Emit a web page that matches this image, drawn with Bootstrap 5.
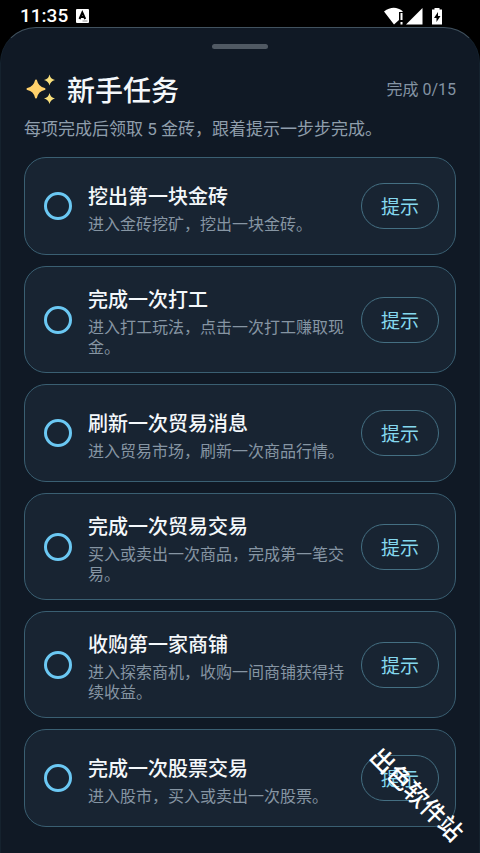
<!DOCTYPE html>
<html lang="zh-CN">
<head>
<meta charset="utf-8">
<meta name="viewport" content="width=device-width, initial-scale=1">
<title>新手任务</title>
<link rel="stylesheet" href="https://cdn.jsdelivr.net/npm/bootstrap@5.3.0/dist/css/bootstrap.min.css">
<style>
body { background: #000; color: #f4f8fb; font-family: Roboto, "Noto Sans CJK SC", sans-serif; }
.status-bar { height: 27px; padding: 5px 36px 0 20px; font-size: 19px; line-height: 22px; font-weight: 500; color: #fff; }
.sheet { background: #101925; border: 1px solid #15222e; border-top-color: #41525f; border-bottom: 0; border-radius: 36px 36px 0 0; padding: 16px 23px 24px; }
.handle { width: 56px; height: 5px; background: #505963; }
.heading { margin-top: 18px; min-height: 42px; }
.heading h1 { font-size: 28px; line-height: 42px; font-weight: 500; padding-top: 4px; }
.progress-note { font-size: 16px; line-height: 24px; color: #8493a3; }
.intro { font-size: 17px; line-height: 26px; margin: 3px 0 15px; color: #8f9eac; }
.tasks { gap: 11px; }
.task { min-height: 98px; padding: 16px 16px 16px 19px; background: #182432; border: 1px solid #3a5f72; border-radius: 22px; }
.task-check { appearance: none; width: 28px; height: 28px; margin: 0 16px 0 0; border: 3px solid #6bc8f3; border-radius: 50%; background: transparent; }
.task-check:checked { background: #6bc8f3; }
.task-text { min-width: 0; margin-right: 10px; padding-top: 3px; }
.task-title { display: block; font-size: 20px; line-height: 28px; font-weight: 500; color: #f4f8fb; }
.task-desc { font-size: 16px; line-height: 20px; margin: 4px 0 -2px; color: #8695a3; }
.hint { width: 78px; height: 46px; padding: 5px 0 0; font-size: 19px; color: #85d8ee; border: 1px solid #446f82; }
.hint:hover { color: #85d8ee; border-color: #85d8ee; }
.site-mark { position: absolute; right: 4px; bottom: 40px; font-size: 24px; line-height: 36px; font-weight: 500; color: #fff; transform: rotate(45deg); pointer-events: none; }
</style>
<script src="https://cdn.jsdelivr.net/npm/bootstrap@5.3.0/dist/js/bootstrap.bundle.min.js" defer></script>
</head>
<body>
<div class="position-relative overflow-hidden min-vh-100 d-flex flex-column">
  <header class="status-bar d-flex align-items-center">
    <span>11:35</span>
    <svg class="ms-2" width="13" height="14" viewBox="0 0 13 14" aria-hidden="true"><rect width="13" height="14" rx="1" fill="#fff"/><path d="M3.500 10 6.300 3.500 9.200 10M4.600 8h3.600" fill="none" stroke="#000" stroke-width="2"/><path d="M6.500 12h5" stroke="#888"/></svg>
    <svg class="ms-auto" width="60" height="18" viewBox="0 0 60 18" aria-hidden="true">
      <path fill="#fff" d="M0 4.500Q10-3 19 4.500L18 5H15v8L10 17.500ZM16.500 6h2v7h-2zm0 9h2v2.500h-2zM22 17.500 38.500 1v16.500ZM48 2.500h2.500V1h5v1.500H58v15H48Z"/>
      <path fill="#000" d="m54 5-4 6h2.500v4l4-6H54Z"/>
    </svg>
  </header>
  <main class="sheet flex-grow-1">
    <div class="handle rounded-pill mx-auto"></div>
    <div class="heading d-flex align-items-center">
      <svg class="me-2" width="35" height="36" viewBox="0 0 35 36" aria-hidden="true"><path fill="#ffd16c" d="M12 8.500Q13.500 15.500 20.500 17 13.500 18.500 12 25.500 10.500 18.500 3.500 17 10.500 15.500 12 8.500Z" stroke="#ffd16c" stroke-linejoin="round" stroke-width="2"/><path fill="#f8df7c" d="M25.500 2.500Q26.500 7 31 8 26.500 9 25.500 13.500 24.500 9 20 8 24.500 7 25.500 2.500ZM25.500 21Q26.500 25.500 31 26.500 26.500 27.500 25.500 32 24.500 27.500 20 26.500 24.500 25.500 25.500 21Z"/></svg>
      <h1 class="mb-0">新手任务</h1>
      <span class="progress-note ms-auto">完成 0/15</span>
    </div>
    <p class="intro">每项完成后领取 5 金砖，跟着提示一步步完成。</p>
    <ul class="tasks list-unstyled d-flex flex-column mb-0">
      <li class="task d-flex align-items-center">
        <input class="task-check flex-shrink-0" type="checkbox" id="task1">
        <div class="task-text flex-grow-1"><label class="task-title" for="task1">挖出第一块金砖</label><p class="task-desc">进入金砖挖矿，挖出一块金砖。</p></div>
        <button type="button" class="hint btn rounded-pill flex-shrink-0">提示</button>
      </li>
      <li class="task d-flex align-items-center">
        <input class="task-check flex-shrink-0" type="checkbox" id="task2">
        <div class="task-text flex-grow-1"><label class="task-title" for="task2">完成一次打工</label><p class="task-desc">进入打工玩法，点击一次打工赚取现金。</p></div>
        <button type="button" class="hint btn rounded-pill flex-shrink-0">提示</button>
      </li>
      <li class="task d-flex align-items-center">
        <input class="task-check flex-shrink-0" type="checkbox" id="task3">
        <div class="task-text flex-grow-1"><label class="task-title" for="task3">刷新一次贸易消息</label><p class="task-desc">进入贸易市场，刷新一次商品行情。</p></div>
        <button type="button" class="hint btn rounded-pill flex-shrink-0">提示</button>
      </li>
      <li class="task d-flex align-items-center">
        <input class="task-check flex-shrink-0" type="checkbox" id="task4">
        <div class="task-text flex-grow-1"><label class="task-title" for="task4">完成一次贸易交易</label><p class="task-desc">买入或卖出一次商品，完成第一笔交易。</p></div>
        <button type="button" class="hint btn rounded-pill flex-shrink-0">提示</button>
      </li>
      <li class="task d-flex align-items-center">
        <input class="task-check flex-shrink-0" type="checkbox" id="task5">
        <div class="task-text flex-grow-1"><label class="task-title" for="task5">收购第一家商铺</label><p class="task-desc">进入探索商机，收购一间商铺获得持续收益。</p></div>
        <button type="button" class="hint btn rounded-pill flex-shrink-0">提示</button>
      </li>
      <li class="task d-flex align-items-center">
        <input class="task-check flex-shrink-0" type="checkbox" id="task6">
        <div class="task-text flex-grow-1"><label class="task-title" for="task6">完成一次股票交易</label><p class="task-desc">进入股市，买入或卖出一次股票。</p></div>
        <button type="button" class="hint btn rounded-pill flex-shrink-0">提示</button>
      </li>
    </ul>
  </main>
  <div class="site-mark">出色软件站</div>
</div>
</body>
</html>
